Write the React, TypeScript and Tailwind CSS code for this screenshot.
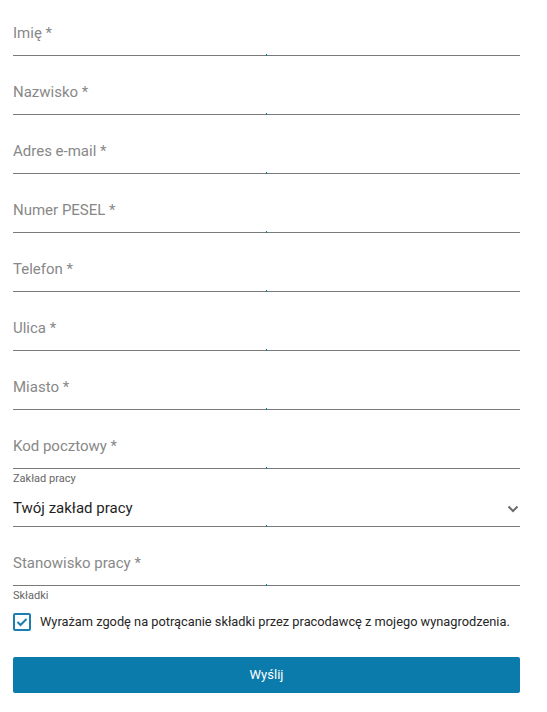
import React from 'react';

const fields = ['Nazwisko *', 'Adres e-mail *', 'Numer PESEL *', 'Telefon *', 'Ulica *', 'Miasto *', 'Kod pocztowy *'];

function FocusMark() {
  return <span className="absolute left-[253px] bottom-[-1px] h-[2px] w-[1px] bg-[#0a7bab]" />;
}

function TextField({ label, first }: { label: string; first?: boolean }) {
  return (
    <div
      className={`relative flex items-end border-b border-[#7a7a76] pb-[12px] ${first ? 'h-[56px]' : 'h-[59px]'}`}
    >
      <span className="text-[15px] leading-[19px] text-[#888888]">{label}</span>
      <FocusMark />
    </div>
  );
}

export default function App() {
  return (
    <div className="w-[547px] bg-white px-[13px] font-['Roboto',sans-serif]">
      <form className="w-[507px]" onSubmit={(e) => e.preventDefault()}>
        <TextField label="Imię *" first />
        {fields.map((f) => (
          <TextField key={f} label={f} />
        ))}

        <div className="relative flex h-[58px] flex-col justify-between border-b border-[#7a7a76] pb-[8px] pt-[3px]">
          <span className="text-[11px] leading-[13px] text-[#666666]">Zakład pracy</span>
          <div className="flex items-center justify-between">
            <span className="text-[15px] leading-[19px] text-[#1f1f1f]">Twój zakład pracy</span>
            <svg width="12" height="8" viewBox="0 0 12 8" className="mr-[1px] mt-[1px]">
              <path d="M1.5 1.5 L6 6 L10.5 1.5" fill="none" stroke="#6b6b6b" strokeWidth="2" />
            </svg>
          </div>
          <FocusMark />
        </div>

        <TextField label="Stanowisko pracy *" />

        <div className="pt-[3px] text-[11px] leading-[13px] text-[#666666]">Składki</div>

        <label className="mt-[11px] flex items-center gap-[9px]">
          <span className="flex h-[18px] w-[18px] items-center justify-center rounded-[2px] border-2 border-[#1a7fb0] bg-white">
            <svg width="12" height="10" viewBox="0 0 12 10">
              <path d="M1.5 5 L4.5 8 L10.5 2" fill="none" stroke="#1a7fb0" strokeWidth="2" />
            </svg>
          </span>
          <span className="text-[12.8px] leading-[16px] text-[#262626]">
            Wyrażam zgodę na potrącanie składki przez pracodawcę z mojego wynagrodzenia.
          </span>
        </label>

        <button
          type="submit"
          className="mt-[26px] flex h-[36px] w-full items-center justify-center rounded-[2px] bg-[#0a7bab] text-[13px] text-white"
        >
          Wyślij
        </button>
      </form>
    </div>
  );
}
